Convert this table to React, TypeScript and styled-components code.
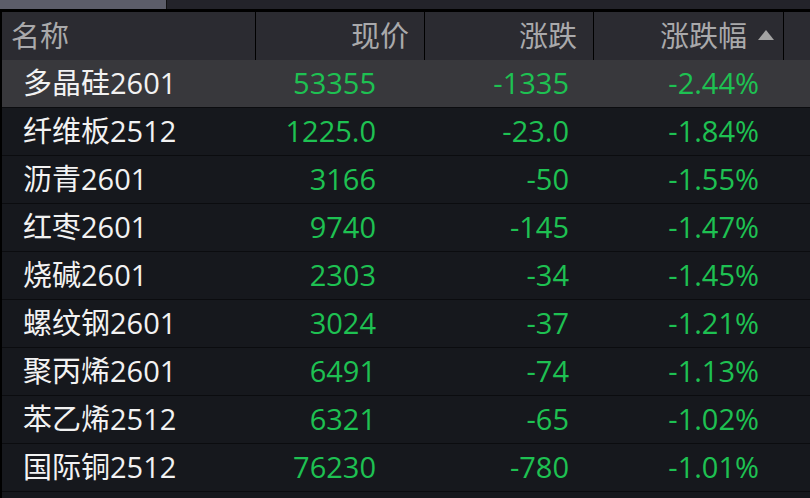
import React from "react";
import styled, { createGlobalStyle } from "styled-components";

const Global = createGlobalStyle`
  html, body { margin: 0; padding: 0; background: #16181d; }
  body { width: 810px; height: 498px; overflow: hidden; }
`;

const FONT = `"Open Sans", "Noto Sans CJK SC", sans-serif`;

const Page = styled.div`
  width: 810px;
  height: 498px;
  display: flex;
  flex-direction: column;
  background: #16181d;
  font-family: ${FONT};
`;

const TopBar = styled.div`
  height: 9px;
  display: flex;
  background: #23232a;
  border-bottom: 3px solid #000;
`;

const Tab = styled.div`
  width: 166px;
  background: #5c5d69;
  border-right: 1px solid #111;
`;

const Table = styled.div`
  flex: 1;
  display: flex;
  flex-direction: column;
  border-left: 2px solid #000;
`;

const COLS = "254px 169px 169px 190px 1fr";

const HeaderRow = styled.div`
  display: grid;
  grid-template-columns: ${COLS};
  height: 48px;
  background: #2b2b31;
`;

const HeadCell = styled.div<{ $align?: "left" | "right"; $pad: number; $sep?: boolean }>`
  display: flex;
  align-items: center;
  justify-content: ${(p) => (p.$align === "left" ? "flex-start" : "flex-end")};
  padding: ${(p) => (p.$align === "left" ? `0 0 2px ${p.$pad}px` : `0 ${p.$pad}px 2px 0`)};
  border-right: ${(p) => (p.$sep ? "1px solid #000" : "none")};
  color: #a9a9ab;
  font-size: 29px;
  line-height: 1;
  gap: 11px;
`;

const SortTri = styled.span`
  width: 0;
  height: 0;
  border-left: 8px solid transparent;
  border-right: 8px solid transparent;
  border-bottom: 10px solid #a3a3a3;
`;

const Row = styled.div<{ $selected?: boolean }>`
  display: grid;
  grid-template-columns: ${COLS};
  height: 47px;
  border-bottom: 1px solid #0b0c0f;
  background: ${(p) => (p.$selected ? "#38383c" : "#16181d")};
`;

const Cell = styled.div<{ $align?: "left" | "right"; $pad: number; $green?: boolean }>`
  display: flex;
  align-items: center;
  justify-content: ${(p) => (p.$align === "left" ? "flex-start" : "flex-end")};
  padding: ${(p) => (p.$align === "left" ? `0 0 3px ${p.$pad}px` : `0 ${p.$pad}px 3px 0`)};
  color: ${(p) => (p.$green ? "#1ec152" : "#f2f2f2")};
  font-size: 29px;
  line-height: 1;
  white-space: nowrap;
`;

const rows = [
  ["多晶硅2601", "53355", "-1335", "-2.44%"],
  ["纤维板2512", "1225.0", "-23.0", "-1.84%"],
  ["沥青2601", "3166", "-50", "-1.55%"],
  ["红枣2601", "9740", "-145", "-1.47%"],
  ["烧碱2601", "2303", "-34", "-1.45%"],
  ["螺纹钢2601", "3024", "-37", "-1.21%"],
  ["聚丙烯2601", "6491", "-74", "-1.13%"],
  ["苯乙烯2512", "6321", "-65", "-1.02%"],
  ["国际铜2512", "76230", "-780", "-1.01%"],
];

export default function App() {
  return (
    <Page>
      <Global />
      <TopBar>
        <Tab />
      </TopBar>
      <Table>
        <HeaderRow>
          <HeadCell $align="left" $pad={9} $sep>名称</HeadCell>
          <HeadCell $pad={15} $sep>现价</HeadCell>
          <HeadCell $pad={16} $sep>涨跌</HeadCell>
          <HeadCell $pad={9} $sep>
            涨跌幅
            <SortTri />
          </HeadCell>
          <HeadCell $pad={0} />
        </HeaderRow>
        {rows.map((r, i) => (
          <Row key={r[0]} $selected={i === 0}>
            <Cell $align="left" $pad={21}>{r[0]}</Cell>
            <Cell $pad={49} $green>{r[1]}</Cell>
            <Cell $pad={25} $green>{r[2]}</Cell>
            <Cell $pad={25} $green>{r[3]}</Cell>
            <Cell $pad={0} />
          </Row>
        ))}
      </Table>
    </Page>
  );
}
